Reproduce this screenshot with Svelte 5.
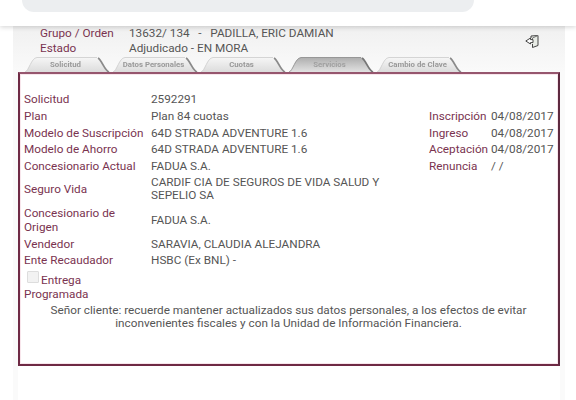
<script>
  const rows = [
    { label: "Solicitud", value: "2592291" },
    { label: "Plan", value: "Plan 84 cuotas" },
    { label: "Modelo de Suscripción", value: "64D STRADA ADVENTURE 1.6" },
    { label: "Modelo de Ahorro", value: "64D STRADA ADVENTURE 1.6" },
    { label: "Concesionario Actual", value: "FADUA S.A." },
    { label: "Seguro Vida", value: "CARDIF CIA DE SEGUROS DE VIDA SALUD Y SEPELIO SA" },
    { label: "Concesionario de Origen", value: "FADUA S.A." },
    { label: "Vendedor", value: "SARAVIA, CLAUDIA ALEJANDRA" },
    { label: "Ente Recaudador", value: "HSBC (Ex BNL) -" }
  ];
  const dates = [
    { label: "Inscripción", value: "04/08/2017" },
    { label: "Ingreso", value: "04/08/2017" },
    { label: "Aceptación", value: "04/08/2017" },
    { label: "Renuncia", value: "/ /" }
  ];
  const tabs = ["Solicitud", "Datos Personales", "Cuotas", "Servicios", "Cambio de Clave"];
</script>

<div class="page">
  <div class="topbar"><div class="search"></div></div>
  <div class="sheet">
    <div class="head">
      <div class="head-labels">
        <div>Grupo / Orden</div>
        <div>Estado</div>
      </div>
      <div class="head-values">
        <div>13632/ 134 &nbsp; - &nbsp; PADILLA, ERIC DAMIAN</div>
        <div>Adjudicado - EN MORA</div>
      </div>
      <svg class="exit" width="14" height="13" viewBox="0 0 14 13" fill="none" stroke="#444" stroke-width="1">
        <path d="M6 3 L6 1 L13 0.5 L13 10.5 L7.5 12.5 L7.5 9" fill="#e8ece6" />
        <path d="M13 0.5 L7.5 3 L7.5 4" stroke="#777" />
        <path d="M5.5 3 L0.8 6 L5.5 9 L5.5 7.6 L8 7.6 L8 4.6 L5.5 4.6 Z" fill="#fff" />
      </svg>
    </div>
    <div class="tabs">
      {#each tabs as tab, i}
        <div class="tab" class:dark={i === 3}>
          <svg class="tab-shape" width="85" height="15" viewBox="0 0 85 15">
            <defs>
              <linearGradient id="tab-fill-{i}" x1="0" y1="0" x2="0" y2="1">
                <stop offset="0" stop-color={i === 3 ? "#aeaeae" : "#f6f6f6"} />
                <stop offset="1" stop-color={i === 3 ? "#e2e2e2" : "#dcdcdc"} />
              </linearGradient>
            </defs>
            <path d="M0 15 C4 14 6 1 12 .5 L72 .5 C77 1 79 14 85 15 Z" fill="url(#tab-fill-{i})" />
            <path d="M0 15 C4 14 6 1 12 .5 L72 .5" fill="none" stroke={i === 3 ? "#888" : "#ccc"} stroke-width=".8" />
            <path d="M73 1 C77 3 79 13 84 15" fill="none" stroke={i === 3 ? "#777" : "#8a8a8a"} stroke-width="1.8" />
          </svg>
          <span>{tab}</span>
        </div>
      {/each}
    </div>
    <div class="panel">
      <div class="columns">
        <div class="rows">
          {#each rows as row}
            <div class="row">
              <div class="label">{row.label}</div>
              <div class="value" class:tight={row.value.length > 40}>{row.value}</div>
            </div>
          {/each}
        </div>
        <div class="dates">
          {#each dates as d}
            <div class="date">
              <div class="label">{d.label}</div>
              <div class="value">{d.value}</div>
            </div>
          {/each}
        </div>
      </div>
      <div class="check label">
        <span class="box"></span>Entrega
        <br />Programada
      </div>
      <p class="note">
        Señor cliente: recuerde mantener actualizados sus datos personales, a los efectos de evitar
        inconvenientes fiscales y con la Unidad de Información Financiera.
      </p>
    </div>
    <div class="foot"></div>
  </div>
</div>

<style>
  :global(body) {
    background: #fff;
  }

  .page {
    width: 576px;
    height: 400px;
    overflow: hidden;
    font-family: Roboto, "Liberation Sans", sans-serif;
    font-size: 11.75px;
    line-height: 14px;
    color: #555;
  }

  .topbar {
    height: 26px;
    background: #fff;
    box-shadow: 0 1px 5px rgba(0, 0, 0, 0.18);
    position: relative;
  }

  .search {
    width: 452px;
    height: 12px;
    margin-left: 22px;
    background: #eceef0;
    border-radius: 0 0 22px 22px;
  }

  .sheet {
    width: 552px;
    height: 374px;
    margin-left: 13px;
    padding: 0 5px;
    box-sizing: border-box;
    display: flex;
    flex-direction: column;
    background: linear-gradient(#f0f0f0, #fafafa 46px);
  }

  .head {
    display: flex;
    flex: none;
    height: 31px;
    padding-left: 22px;
    line-height: 14.5px;
    position: relative;
  }

  .head-labels {
    width: 89px;
    color: #7a3350;
  }

  .exit {
    position: absolute;
    left: 507px;
    top: 9px;
  }

  .tabs {
    display: flex;
    flex: none;
    gap: 3px;
    height: 15px;
    padding-left: 7px;
  }

  .tab {
    position: relative;
    width: 85px;
    height: 15px;
    padding-right: 4px;
    box-sizing: border-box;
    font-size: 7.8px;
    font-weight: 700;
    line-height: 15px;
    text-align: center;
    color: #999;
  }

  .tab span {
    position: relative;
    filter: blur(0.3px);
  }

  .tab-shape {
    position: absolute;
    left: 0;
    top: 0;
  }

  .tab.dark {
    color: #a0a0a0;
  }

  .panel {
    width: 542px;
    height: 294px;
    flex: none;
    box-sizing: border-box;
    border: 2px solid #6e2a44;
    border-top-color: #96566e;
    border-right-color: #5e2a40;
    background: #fff;
    box-shadow: inset 0 0 0 1px #f8e6ec;
    padding: 16.7px 5px 0 4px;
  }

  .foot {
    flex: 1;
    background: #fff;
  }

  .columns {
    display: flex;
    justify-content: space-between;
  }

  .rows {
    width: 375px;
  }

  .row {
    display: flex;
    align-items: center;
    padding: 1.4px 0;
  }

  .row .label {
    width: 127px;
    padding-right: 6px;
    box-sizing: border-box;
    flex: none;
  }

  .row .value {
    width: 240px;
  }

  .row .value.tight {
    line-height: 13.5px;
  }

  .label {
    color: #7a3350;
  }

  .dates {
    width: 124px;
    margin-top: 16.8px;
  }

  .date {
    display: flex;
    padding: 1.4px 0;
  }

  .date .label {
    width: 62px;
    flex: none;
  }

  .check {
    margin-top: 2.5px;
  }

  .box {
    display: inline-block;
    width: 12px;
    height: 12px;
    margin: 0 2px 0 3px;
    background: #f2f2f2;
    border: 1px solid #ddd;
    border-radius: 1px;
    box-sizing: border-box;
    vertical-align: 1px;
  }

  .note {
    margin: 3px 0 0;
    padding: 0 14px;
    line-height: 13px;
    text-align: center;
  }
</style>
